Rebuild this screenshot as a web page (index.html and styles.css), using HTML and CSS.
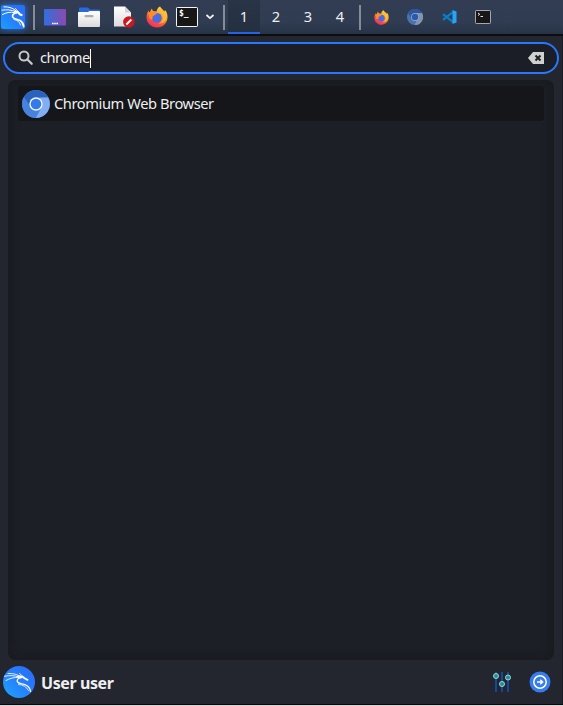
FILE: index.html
```
<!DOCTYPE html>
<html lang="en">
<head>
<meta charset="utf-8">
<title>Application menu</title>
<link rel="stylesheet" href="styles.css">
</head>
<body>
<svg class="defs" aria-hidden="true">
  <defs>
    <linearGradient id="kali" x1="1" y1="0" x2="0" y2="1"><stop offset="0" stop-color="#2b6cf6"/><stop offset=".5" stop-color="#267ffb"/><stop offset="1" stop-color="#1ea6ff"/></linearGradient>
    <linearGradient id="desk" x1="0" y1="0" x2="1" y2="0"><stop offset="0" stop-color="#316fe0"/><stop offset="1" stop-color="#8a4aae"/></linearGradient>
    <linearGradient id="paper" x1="0" y1="0" x2="0" y2="1"><stop offset="0" stop-color="#fff"/><stop offset="1" stop-color="#dcdcdc"/></linearGradient>
    <linearGradient id="fire" x1=".85" y1="0" x2=".25" y2="1"><stop offset="0" stop-color="#ffe34a"/><stop offset=".35" stop-color="#ffb02f"/><stop offset=".65" stop-color="#ff5a35"/><stop offset="1" stop-color="#f0286a"/></linearGradient>
    <symbol id="firefox" viewBox="0 0 22 22">
      <path fill="url(#fire)" d="M14 .5c1 2 3.300 3 4.300 5 .5-.3.600-1 .5-1.700C21 6 21.600 9 21.500 11.500 21.200 17.500 16.800 21.500 11 21.500S.5 17 .5 11.200C.5 8 1.500 6 2.700 4.600l.4 1.900 1.300-1.200C4.700 4 5.200 3 6 2.400c.1 1.300.7 2.200 1.600 2.900 1 .1 2 .1 3 .2C11 3 12 1.500 14 .5z"/>
      <circle cx="10.800" cy="11.800" r="4.900" fill="#4a6be6"/>
      <path fill="#ff8b29" d="M2.500 7c2-1.500 4-1.700 6-1l2.500.8c-.4 1.500-1.700 2-2.700 2.500-1.700.8-2.200 2.200-1.700 3.700C5.500 14.500 3.500 13 3 11z"/>
      <path fill="#ffbd38" d="M12.500 4.500c3 1.200 5.500 4 4.500 8.500-.7 2.300-2.500 4-4.500 4.500 5.500.5 8.200-3.500 7.500-8-.7-3-3-5-5.500-7z"/>
    </symbol>
    <symbol id="chromium" viewBox="0 0 28 28">
      <circle cx="14" cy="14" r="14" fill="#4782dd"/>
      <path fill="#2a62be" d="M1.900 7A14 14 0 0 1 26.100 7.500L14 8 8.300 17z"/>
      <path fill="#83aef2" d="M26.200 7.500A14 14 0 0 1 13.500 28l6-11.500c1.400-3.500.3-6.700-2.500-9z"/>
      <path fill="#4782dd" d="M1.900 7A14 14 0 0 0 13.500 28l5.700-10L14 20 8.500 17z"/>
      <circle cx="14" cy="14" r="6.700" fill="#f2f6ff"/><circle cx="14" cy="14" r="5.300" fill="#347aeb"/>
    </symbol>
    <symbol id="dragon" viewBox="0 0 24 24">
      <g fill="none" stroke="#fff" stroke-linecap="round" stroke-linejoin="round">
        <path stroke-width="1" d="M3 1.800C8 1.800 12.500 3 15.500 6.200M1 5.200c5-.8 9.500-.5 13.500 1.500M1.500 9.500c3.500-2 7.500-2.700 12-2"/>
        <path stroke-width="2.200" d="M14 6.500c2.200 0 3.700 1 4.700 2.700l1.800.8"/>
        <path stroke-width="1.700" d="M15.500 8c-3 .3-4.500 2-3.800 4 .8 2.200 4.500 2 7.300 3.600 2.300 1.300 3.500 3.200 3.700 6"/>
        <path stroke-width=".9" d="M13 14.500c3.500.6 5.500 2.300 6.500 5.500M14.500 3.500l3 3.500"/>
      </g>
    </symbol>
    <symbol id="dragon-thin" viewBox="0 0 32 32">
      <g fill="none" stroke="#f7faff" stroke-linecap="round" stroke-linejoin="round">
        <path stroke-width=".9" d="M5 7.500c5 0 9 .5 11.500 2.800M1.500 10.200c6-1 10-.8 14 .8M3 14.500c4-2.300 8-3.300 12.500-3"/>
        <path stroke-width="1.900" d="M15 10.300c3-.4 5.500.5 7 2.200l2.500 1.300"/>
        <path stroke-width="1.300" d="M18.500 11.500c-3 .3-4.800 2-4.200 4 .7 2.300 4.800 2 8 3.300 3 1.200 4.800 3.300 5.200 6.700"/>
        <path stroke-width=".8" d="M15.500 18.500c4.500.2 8 2.300 10 6M16.500 7.500l4 3.500"/>
      </g>
    </symbol>
  </defs>
</svg>

<header class="panel">
  <div class="slot start"><div class="kali"><svg width="24" height="24"><use href="#dragon"/></svg></div></div>
  <i class="sep"></i>
  <div class="slot"><svg width="22" height="17" viewBox="0 0 22 17"><rect width="22" height="17" rx="1" fill="url(#desk)"/><path d="M0 16.500h22" stroke="#4544a0"/><path d="M8 14.500h6" stroke="#fff" stroke-width="1.500" stroke-dasharray="1.600 .6"/></svg></div>
  <div class="slot"><svg width="22" height="20" viewBox="0 0 22 20"><path fill="#2869dc" d="M1 7V1.500Q1 .5 2 .5h8l2 2h9q1 0 1 1V7z"/><path fill="url(#paper)" d="M0 5.500q0-.5.7-.5H10l1.500-1H21q1 0 1 1v14q0 1-1 1H1q-1 0-1-1z"/><rect x="6.500" y="8" width="9" height="2.200" rx="1" fill="#aaa"/></svg></div>
  <div class="slot doc"><svg width="22" height="22" viewBox="0 0 22 22"><path fill="url(#paper)" d="M1 .5h11l6 6V20.500H1z"/><path fill="#d3d3d3" d="M12 .5v6h6z"/><circle cx="15.800" cy="16" r="5.700" fill="#cd171d"/><path d="M13.300 18.500l5-5" stroke="#fff" stroke-width="1.900"/></svg></div>
  <div class="slot"><svg width="22" height="22"><use href="#firefox"/></svg></div>
  <div class="slot term"><svg width="22" height="20" viewBox="0 0 22 20"><rect x=".5" y=".5" width="21" height="19" rx=".7" fill="#171717" stroke="#f4f4f4"/></svg><span class="prompt">$_</span></div>
  <div class="slot chev"><svg width="10" height="6" viewBox="0 0 10 6"><path d="M1.500 1l3.500 3.200L8.500 1" fill="none" stroke="#f3f4f6" stroke-width="1.700"/></svg></div>
  <i class="sep second"></i>
  <nav class="spaces"><a class="active">1</a><a>2</a><a>3</a><a>4</a></nav>
  <i class="sep third"></i>
  <div class="tasks">
    <div><svg width="15" height="15"><use href="#firefox"/></svg></div>
    <div><svg width="16" height="16" viewBox="0 0 16 16"><circle cx="8" cy="8" r="8" fill="#4a72ad"/><path fill="#2c579d" d="M1 4a8 8 0 0 1 14 0L8 5l-3 5z"/><path fill="#8294b0" d="M15 4a8 8 0 0 1-7.500 12L11 9 9.500 4z"/><circle cx="8" cy="8" r="3.900" fill="#a0b0ca"/><circle cx="8" cy="8" r="3.200" fill="#285bac"/></svg></div>
    <div><svg width="15" height="14" viewBox="0 0 15 14"><path d="M1 4.200L11.500 12.300M1 9.800L11.500 1.700" stroke="#087fca" stroke-width="2.300"/><path fill="#27a4f2" d="M10.500 0L14.500 1.500v11l-4 1.500z"/></svg></div>
    <div><svg width="16" height="14" viewBox="0 0 16 14"><rect x=".5" y=".5" width="15" height="13" rx=".7" fill="#171717" stroke="#a5a7aa"/><path d="M3 3l1.800 1.300L3 5.500M5.500 6.500h2.500" fill="none" stroke="#e4e4e4"/></svg></div>
  </div>
</header>

<main class="menu">
  <div class="search">
    <svg width="16" height="16" viewBox="0 0 16 16"><circle cx="6" cy="6" r="4.500" fill="none" stroke="#c6c7c8" stroke-width="2"/><path d="M9.200 9.200l4.500 4.500" stroke="#c6c7c8" stroke-width="2.300" stroke-linecap="round"/></svg>
    <span class="query">chrome</span><i class="caret"></i>
    <svg class="clear" width="16" height="12" viewBox="0 0 16 12"><path fill="#d0d0cf" d="M5 0h11v12H5L0 6z"/><path d="M7.500 3.500l5 5M12.500 3.500l-5 5" stroke="#1c1f27" stroke-width="2"/></svg>
  </div>
  <section class="results">
    <div class="result"><svg width="28" height="28"><use href="#chromium"/></svg><span>Chromium Web Browser</span></div>
  </section>
  <footer class="footer">
    <svg width="32" height="32" viewBox="0 0 32 32"><circle cx="16" cy="16" r="16" fill="url(#kali)"/><use href="#dragon-thin"/></svg>
    <span class="user">User user</span>
    <svg class="tune" width="18" height="22" viewBox="0 0 18 22"><path d="M3 1v20M9 1v20M15 1v20" stroke="#15479c" stroke-width="2"/><g fill="#169398" stroke="#a9d3d2"><circle cx="3" cy="5" r="2.500"/><circle cx="9" cy="13" r="2.500"/><circle cx="15" cy="6.500" r="2.500"/></g></svg>
    <svg width="22" height="22" viewBox="0 0 22 22"><circle cx="11" cy="11" r="10.500" fill="#367bf0"/><circle cx="11" cy="11" r="6.200" fill="none" stroke="#fff" stroke-width="1.500"/><path d="M8 11h5M11.300 8.700l2.400 2.300-2.400 2.300" fill="none" stroke="#fff" stroke-width="1.400"/></svg>
  </footer>
</main>
</body>
</html>
```
FILE: styles.css
```
* { box-sizing: border-box; }
body {
  margin: 0;
  width: 563px;
  height: 706px;
  overflow: hidden;
  display: flex;
  flex-direction: column;
  background: #23252f;
  color: #eeefef;
  font: 14.67px "Noto Sans", sans-serif;
}
svg { display: block; flex: none; }
.defs { position: absolute; width: 0; height: 0; }

.panel {
  height: 36px;
  flex: none;
  display: flex;
  align-items: flex-start;
  background: linear-gradient(#323d53, #303c52 65%, #273345);
  background-size: 100% 34px;
  background-repeat: no-repeat;
  border-bottom: 2px solid #0b0d10;
}
.slot {
  width: 34px;
  height: 34px;
  display: flex;
  align-items: center;
  justify-content: center;
}
.slot.start { width: 33px; justify-content: flex-start; padding-left: 1px; }
.kali {
  background: linear-gradient(45deg, #1c9dff, #2777f8 60%, #2a6cf5);
  border-radius: 2px;
  box-shadow: 0 0 6px #2472e8;
}
.slot.doc { padding-left: 2px; }
.sep { width: 2px; height: 25px; margin-top: 5px; background: #868c98; }
.sep + .slot { width: 37px; padding-left: 3px; }
.slot.term { position: relative; width: 27px; padding-right: 1px; }
.prompt {
  position: absolute;
  left: 5px;
  top: 9px;
  font: bold 8px/10px "DejaVu Sans Mono", monospace;
  color: #fff;
}
.slot.chev { width: 22px; padding-right: 4px; }
.second { margin-right: 3px; }
.spaces { display: flex; }
.spaces a {
  width: 32px;
  height: 34px;
  line-height: 33px;
  text-align: center;
}
.spaces .active { background: linear-gradient(#293447, #243040); border-bottom: 2px solid #2364e4; }
.third { margin-left: 3px; }
.tasks { display: flex; margin-left: 3px; }
.tasks div { width: 34px; height: 34px; display: flex; align-items: center; justify-content: center; }

.menu {
  height: 670px;
  display: flex;
  flex-direction: column;
  padding: 6px 4px 0 3px;
  border-bottom: 1px solid #d4d4d4;
  box-shadow: inset 0 -1px #08090b, inset -1px 0 #191b22;
}
.search {
  height: 32px;
  flex: none;
  display: flex;
  align-items: center;
  padding: 0 13px;
  border: 2px solid #2777ff;
  border-radius: 16px;
  background: #1b1e26;
}
.query { margin-left: 6px; line-height: 20px; padding-bottom: 2px; letter-spacing: -.5px; }
.caret { width: 1px; height: 19px; background: #fff; }
.clear { margin-left: auto; }
.results {
  flex: 1;
  margin: 6px 5px 0;
  padding: 6px 10px;
  border-radius: 8px;
  background: #1c1f26;
  box-shadow: inset 0 0 10px 2px #191a1e;
}
.result {
  height: 35px;
  display: flex;
  align-items: center;
  gap: 4px;
  padding-left: 4px;
  border-radius: 3px;
  background: #15161a;
}
.result span { padding-bottom: 2px; letter-spacing: -.42px; }
.footer {
  height: 45px;
  flex: none;
  display: flex;
  align-items: center;
  padding: 0 8px 1px 0;
}
.user { margin-left: 6px; padding-top: 1px; font-size: 16px; font-weight: 700; letter-spacing: -.4px; }
.tune { margin-left: auto; margin-right: 18px; }
```
